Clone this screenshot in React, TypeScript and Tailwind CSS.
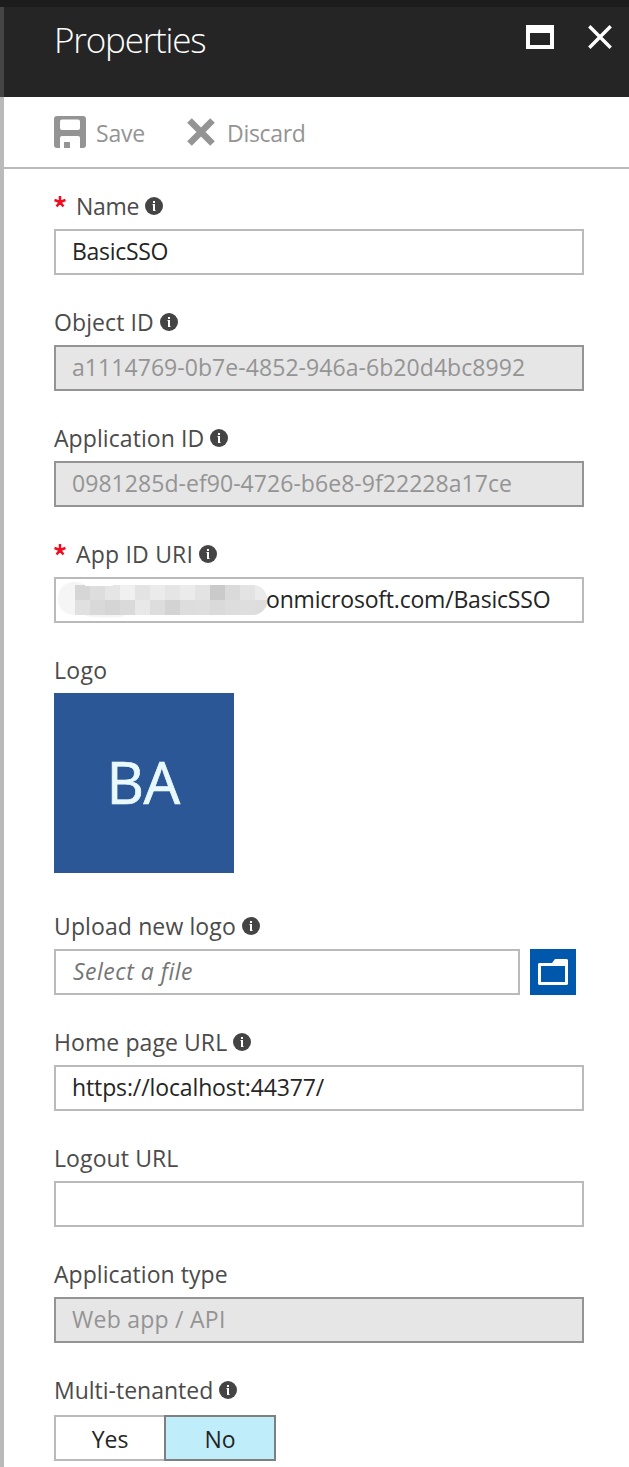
import type { ReactNode } from "react";

function InfoIcon() {
  return (
    <svg className="mt-1 h-[18px] w-[18px] shrink-0" viewBox="0 0 18 18">
      <circle cx="9" cy="9" r="9" fill="#444" />
      <path d="M8 4h2v2H8zM7.500 7H10v6h.5v1H8V8h-.5z" fill="#fff" />
    </svg>
  );
}

type FieldProps = {
  label: string;
  labelClass: string;
  required?: boolean;
  info?: boolean;
  className?: string;
  children: ReactNode;
};

function Field({ label, labelClass, required, info, className = "mb-[34px] ", children }: FieldProps) {
  return (
    <div className={className}>
      <div className="flex h-9 items-start">
        {required && (
          <svg className="mt-[2px] mr-[10px] h-[14px] w-3 shrink-0" viewBox="0 0 12 14">
            <path d="M6 7V1M6 7L.5 5M6 7l5.500-2M6 7l-3.400 4.600M6 7l3.400 4.600" stroke="#f00d20" strokeWidth="2.500" fill="none" />
          </svg>
        )}
        <span className={`block shrink-0 whitespace-nowrap leading-[26px] text-[#4b4b4b] ${labelClass}`}>{label}</span>
        {info && <InfoIcon />}
      </div>
      {children}
    </div>
  );
}

function Box({ text = "", disabled, textClass = "" }: { text?: string; disabled?: boolean; textClass?: string }) {
  return (
    <div
      className={`flex h-[46px] w-[530px] items-center whitespace-nowrap border-2 px-4 pb-[2px] ${
        disabled ? "border-[#949494] bg-[#e6e6e6] text-[#949494]" : "border-[#bababa] bg-white text-[#252525]"
      }`}
    >
      <span className={textClass}>{text}</span>
    </div>
  );
}

const mosaic = [
  ["#d6d6d6", "#dddddd", "#e5e5e5", "#f0f0f0", "#e3e3e3", "#ebebeb", "#e5e5e5", "#ebebeb", "#e3e3e3", "#cacaca", "#dadada", "#e3e3e3", "#ebebeb"],
  ["#e0e0e0", "#d9d9d9", "#d5d5d5", "#dadada", "#e8e8e8", "#dddddd", "#d3d3d3", "#dddddd", "#dedede", "#dadada", "#dddddd", "#dedede", "#dddddd"],
];

function RedactedPrefix() {
  return (
    <svg className="ml-[2px] h-9 w-[210px] shrink-0" viewBox="58 582 210 36">
      <defs>
        <clipPath id="brush">
          <path d="M75 585h10v1h28v-1h140a14.500 15 0 0 1 0 30H75z" />
        </clipPath>
      </defs>
      <path d="M58 599c0-10 6-16 15-17 6 0 10 1 13 4v30c5 1 20 2 35 1l4-2H75c-10 0-17-6-17-16z" fill="#f5f5f5" />
      <g clipPath="url(#brush)">
        {mosaic.map((row, y) =>
          row.map((c, x) => <rect key={`${x}-${y}`} x={75 + x * 15} y={585 + y * 15} width="15" height="15" fill={c} />),
        )}
      </g>
    </svg>
  );
}

export default function App() {
  return (
    <div className="flex h-[1467px] w-[629px] flex-col overflow-hidden bg-white font-['Open_Sans',sans-serif] text-[23px]">
      <div className="h-[7px] shrink-0 bg-[#1c1c1c]" />
      <header className="flex h-[90px] shrink-0 items-start border-l-4 border-[#454545] bg-[#252525] pl-[50px] text-white">
        <h1 className="w-[472px] text-[35px] font-light leading-[66px] tracking-[-1.2px]">Properties</h1>
        <svg className="mt-[18px] h-6 w-7" viewBox="0 0 28 24">
          <path d="M0 0h28v24H0zM4 8v12h20V8z" fill="#fff" fillRule="evenodd" />
        </svg>
        <svg className="mt-[18px] ml-[34px] h-6 w-6" viewBox="0 0 24 24">
          <path d="M1.300 1.300l21.400 21.400M22.700 1.300L1.300 22.700" stroke="#fff" strokeWidth="3.400" />
        </svg>
      </header>
      <main className="min-h-0 flex-1 border-l-4 border-[#bababa]">
        <div className="flex h-[72px] items-start border-b-2 border-[#bababa] pl-[50px] text-[#949494]">
          <svg className="mt-[19px] h-8 w-8" viewBox="0 0 32 32">
            <path
              d="M3 0h26a3 3 0 0 1 3 3v26a3 3 0 0 1-3 3h-3V22a2 2 0 0 0-2-2H8a2 2 0 0 0-2 2v10H3a3 3 0 0 1-3-3V3a3 3 0 0 1 3-3zM8 3.500a2 2 0 0 0-2 2V12a2 2 0 0 0 2 2h16a2 2 0 0 0 2-2V5.500a2 2 0 0 0-2-2zM10 26h6v6h-6z"
              fill="#949494"
              fillRule="evenodd"
            />
          </svg>
          <span className="ml-[10px] w-[91px] leading-[72px] tracking-[-0.2px]">Save</span>
          <svg className="mt-[21px] h-7 w-7" viewBox="0 0 28 28">
            <path d="M2.500 2.500l23 23M25.500 2.500l-23 23" stroke="#949494" strokeWidth="6.500" />
          </svg>
          <span className="ml-3 leading-[72px] tracking-[-0.3px]">Discard</span>
        </div>
        <div className="pt-6 pl-[50px]">
          <Field label="Name" labelClass="w-[69px] tracking-[-0.3px]" required info>
            <Box text="BasicSSO" textClass="tracking-[-0.3px]" />
          </Field>
          <Field label="Object ID" labelClass="w-[106px] tracking-[0.1px]" info>
            <Box text="a1114769-0b7e-4852-946a-6b20d4bc8992" textClass="tracking-[0.06px]" disabled />
          </Field>
          <Field label="Application ID" labelClass="w-[156px] tracking-[0.08px]" info>
            <Box text="0981285d-ef90-4726-b6e8-9f22228a17ce" textClass="tracking-[0.05px]" disabled />
          </Field>
          <Field label="App ID URI" labelClass="w-[123px] tracking-[0.2px]" required info>
            <div className="flex h-[46px] w-[530px] items-center border-2 border-[#bababa] text-[#252525]">
              <RedactedPrefix />
              <span className="-ml-[2px] pb-[2px] whitespace-nowrap tracking-[-0.2px]">onmicrosoft.com/BasicSSO</span>
            </div>
          </Field>
          <Field label="Logo" labelClass="tracking-[0.3px]" className="mb-10">
            <div className="flex h-[180px] w-[180px] items-center justify-center bg-[#2b5797] pr-[2px] pb-1 text-[58px] tracking-[-0.5px] text-[#e8faff] [-webkit-text-stroke:0.7px_#e8faff]">
              <span>BA</span>
            </div>
          </Field>
          <Field label="Upload new logo" labelClass="w-[188px] tracking-[0.12px]" info>
            <div className="flex gap-[10px]">
              <div className="flex h-[46px] w-[466px] items-center border-2 border-[#bababa] pr-4 pb-[2px] pl-[17px] tracking-[0.5px] text-[#757575] italic">
                <span>Select a file</span>
              </div>
              <button className="flex h-[46px] w-[46px] items-center justify-center bg-[#0058ad]">
                <svg className="h-[26px] w-[30px]" viewBox="0 0 30 26">
                  <path d="M1 4h13l3-4h12l1 1v24l-1 1H1l-1-1V5zM3 7v16h24V7z" fill="#fff" fillRule="evenodd" />
                </svg>
              </button>
            </div>
          </Field>
          <Field label="Home page URL" labelClass="w-[179px] tracking-[0.08px]" info>
            <Box text="https://localhost:44377/" textClass="tracking-[-0.12px]" />
          </Field>
          <Field label="Logout URL" labelClass="tracking-[0.1px]">
            <Box />
          </Field>
          <Field label="Application type" labelClass="tracking-[0.06px]">
            <Box text="Web app / API" textClass="tracking-[0.25px]" disabled />
          </Field>
          <Field label="Multi-tenanted" labelClass="w-[165px]" info>
            <div className="mt-[2px] flex h-[46px] text-[#252525]">
              <button className="w-[110px] border-2 border-r-0 border-[#bababa] pt-[2px]">Yes</button>
              <button className="w-28 border-2 border-[#7f7f7f] bg-[#bfeefa] pt-[2px]">No</button>
            </div>
          </Field>
        </div>
      </main>
    </div>
  );
}
